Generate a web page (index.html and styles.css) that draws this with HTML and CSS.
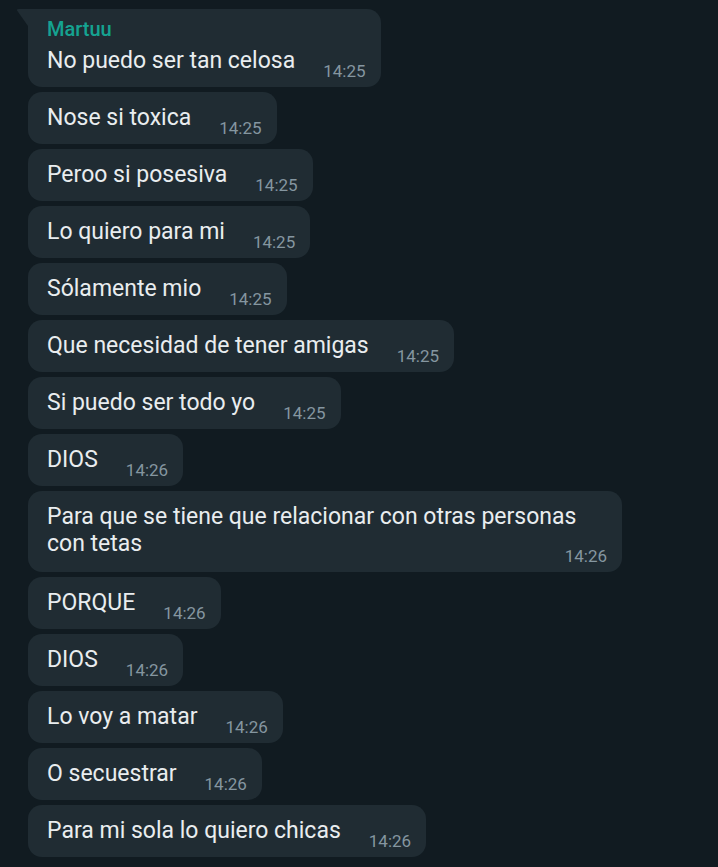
FILE: index.html
```html
<!DOCTYPE html>
<html lang="es">
<head>
  <meta charset="UTF-8">
  <meta name="viewport" content="width=device-width, initial-scale=1.0">
  <title>Chat</title>
  <link rel="stylesheet" href="styles.css">
</head>
<body>
  <main class="chat">
    <div class="bubble first">
      <div class="body">
        <div class="name">Martuu</div>
        <div class="row">
          <span class="text">No puedo ser tan celosa</span>
          <span class="time">14:25</span>
        </div>
      </div>
    </div>
    <div class="bubble"><span class="text">Nose si toxica</span><span class="time">14:25</span></div>
    <div class="bubble"><span class="text">Peroo si posesiva</span><span class="time">14:25</span></div>
    <div class="bubble"><span class="text">Lo quiero para mi</span><span class="time">14:25</span></div>
    <div class="bubble"><span class="text">Sólamente mio</span><span class="time">14:25</span></div>
    <div class="bubble"><span class="text">Que necesidad de tener amigas</span><span class="time">14:25</span></div>
    <div class="bubble"><span class="text">Si puedo ser todo yo</span><span class="time">14:25</span></div>
    <div class="bubble"><span class="text">DIOS</span><span class="time">14:26</span></div>
    <div class="bubble long"><span class="text">Para que se tiene que relacionar con otras personas<br>con tetas</span><span class="time">14:26</span></div>
    <div class="bubble"><span class="text">PORQUE</span><span class="time">14:26</span></div>
    <div class="bubble"><span class="text">DIOS</span><span class="time">14:26</span></div>
    <div class="bubble"><span class="text">Lo voy a matar</span><span class="time">14:26</span></div>
    <div class="bubble"><span class="text">O secuestrar</span><span class="time">14:26</span></div>
    <div class="bubble"><span class="text">Para mi sola lo quiero chicas</span><span class="time">14:26</span></div>
  </main>
</body>
</html>
```

FILE: styles.css
```css
body {
  margin: 0;
  background-color: #111b21;
  font-family: Roboto, "Noto Sans", sans-serif;
  color: #e9edef;
}

.chat {
  display: flex;
  flex-direction: column;
  align-items: flex-start;
  gap: 5px;
  padding: 9px 0 0 28px;
}

.bubble {
  position: relative;
  display: flex;
  align-items: flex-end;
  background-color: #202c33;
  border-radius: 14px;
  padding: 12px 15px 6px 19px;
}

.bubble.first {
  border-top-left-radius: 0;
  padding-top: 8px;
}

/* little tail on the first message of the group */
.bubble.first::before {
  content: "";
  position: absolute;
  left: -12px;
  top: 0;
  width: 12px;
  height: 17px;
  background-color: #202c33;
  clip-path: polygon(0 0, 100% 0, 100% 100%);
  border-top-left-radius: 3px;
}

.body {
  display: flex;
  flex-direction: column;
}

.row {
  display: flex;
  align-items: flex-end;
}

.name {
  font-size: 20px;
  line-height: 24px;
  font-weight: 500;
  color: #15a391;
  margin-bottom: 6px;
}

.text {
  font-size: 23px;
  line-height: 27px;
  padding-bottom: 7px;
  white-space: nowrap;
}

.time {
  font-size: 17px;
  line-height: 20px;
  color: #8596a0;
  margin-left: 28px;
}

.bubble.long {
  flex-direction: column;
  align-items: flex-start;
  width: 594px;
  box-sizing: border-box;
}

.bubble.long .text {
  padding-bottom: 0;
}

.bubble.long .time {
  align-self: flex-end;
  margin-top: -11px;
}
```
